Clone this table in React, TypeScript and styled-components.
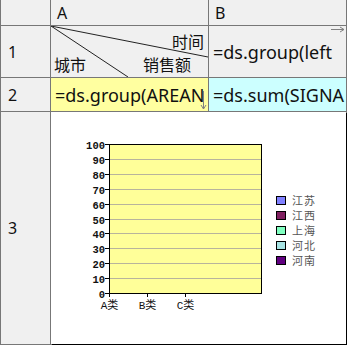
import React from "react";
import styled, { createGlobalStyle } from "styled-components";

const Global = createGlobalStyle`
  html, body { margin: 0; padding: 0; background: #ffffff; }
  body { font-family: "Noto Sans", "Noto Sans CJK SC", sans-serif; }
`;

const LINE = "#777777";

const Sheet = styled.div`
  display: grid;
  grid-template-columns: 49px 157px 137px;
  grid-template-rows: 25px 51px 33px 232px;
  gap: 1px;
  width: max-content;
  background: ${LINE};
  border-left: 1px solid ${LINE};
  border-right: 1px solid ${LINE};
  border-bottom: 1px solid ${LINE};
  font-family: "Noto Sans", "Noto Sans CJK SC", sans-serif;
  font-size: 16px;
  color: #111;
`;

const HeadCell = styled.div<{ $pad?: number }>`
  background: #f0f0f0;
  display: flex;
  align-items: center;
  padding-left: ${(p) => p.$pad ?? 6}px;
  line-height: 1;
`;

const Cell = styled.div<{ $bg: string }>`
  position: relative;
  background: ${(p) => p.$bg};
  display: flex;
  align-items: center;
  padding-left: 4px;
  overflow: hidden;
  white-space: nowrap;
  line-height: 1;
  font-size: 18px;
`;

const DiagCell = styled.div`
  position: relative;
  background: #f0f0f0;
  display: flex;
  flex-direction: column;
  justify-content: space-between;
  padding: 8px 4px 4px 3px;
  line-height: 1;
`;

const DiagLines = styled.svg`
  position: absolute;
  left: 0;
  top: 0;
  pointer-events: none;
`;

const DiagTop = styled.div`
  display: flex;
  justify-content: flex-end;
  position: relative;
`;

const DiagBottom = styled.div`
  display: flex;
  justify-content: space-between;
  padding-right: 13px;
  position: relative;
`;

const Marker = styled.svg<{ $right?: number; $top?: number }>`
  position: absolute;
  right: ${(p) => p.$right ?? 0}px;
  top: ${(p) => p.$top ?? 0}px;
`;

const ChartCell = styled.div`
  grid-column: 2 / span 2;
  background: #ffffff;
  box-shadow: 1px 1px 0 #000;
  display: flex;
`;

const ChartSvg = styled.svg`
  display: block;
  font-family: "Liberation Mono", "Noto Sans CJK SC", monospace;
`;

const legend = [
  { name: "江苏", color: "#8080ff" },
  { name: "江西", color: "#802060" },
  { name: "上海", color: "#80ffc0" },
  { name: "河北", color: "#a8e4e4" },
  { name: "河南", color: "#600080" },
];

function Chart() {
  const px = 58;
  const py = 32;
  const pw = 153;
  const ph = 149;
  const ticks = Array.from({ length: 11 }, (_, i) => i * 10);
  return (
    <ChartSvg width={295} height={232} viewBox="0 0 295 232">
      <rect x={px} y={py} width={pw} height={ph} fill="#ffff99" />
      {ticks.slice(1, 10).map((t) => {
        const y = Math.round(py + ph - (t / 100) * ph) + 0.5;
        return <line key={t} x1={px} x2={px + pw} y1={y} y2={y} stroke="#b8b49c" strokeWidth={1} />;
      })}
      <rect x={px + 0.5} y={py + 0.5} width={pw - 1} height={ph} fill="none" stroke="#000" strokeWidth={1} />
      {ticks.map((t) => {
        const y = Math.round(py + ph - (t / 100) * ph) + 0.5;
        return (
          <g key={t}>
            <line x1={px - 4} x2={px} y1={y} y2={y} stroke="#000" />
            <text x={px - 4} y={y + 4} fontSize={10.5} fontWeight={700} textAnchor="end" fill="#111">
              {t}
            </text>
          </g>
        );
      })}
      {["A类", "B类", "C类"].map((c, i) => {
        const x = px + i * 38 + 0.5;
        return (
          <g key={c}>
            <line x1={x} x2={x} y1={py + ph} y2={py + ph + 4} stroke="#000" />
            <text x={x} y={197} fontSize={11} textAnchor="middle" fill="#111">
              {c}
            </text>
          </g>
        );
      })}
      {legend.map((l, i) => (
        <g key={l.name}>
          <rect x={225.5} y={84.5 + i * 15} width={9} height={8} fill={l.color} stroke="#000" />
          <text x={241} y={93 + i * 15} fontSize={11} fill="#555" letterSpacing={1}>
            {l.name}
          </text>
        </g>
      ))}
    </ChartSvg>
  );
}

export default function App() {
  return (
    <>
      <Global />
      <Sheet>
        <HeadCell />
        <HeadCell>A</HeadCell>
        <HeadCell>B</HeadCell>

        <HeadCell $pad={7}>1</HeadCell>
        <DiagCell>
          <DiagLines width={157} height={51}>
            <line x1={0} y1={0} x2={157} y2={31} stroke="#222" strokeWidth={1} />
            <line x1={0} y1={0} x2={77} y2={51} stroke="#222" strokeWidth={1} />
          </DiagLines>
          <DiagTop>时间</DiagTop>
          <DiagBottom>
            <span>城市</span>
            <span>销售额</span>
          </DiagBottom>
        </DiagCell>
        <Cell $bg="#f0f0f0">
          =ds.group(left
          <Marker $right={1} $top={0} width={14} height={7} viewBox="0 0 14 7">
            <line x1={0} y1={3.5} x2={13} y2={3.5} stroke="#808080" />
            <path d="M9 1 L13 3.5 L9 6" fill="none" stroke="#808080" />
          </Marker>
        </Cell>

        <HeadCell $pad={7}>2</HeadCell>
        <Cell $bg="#ffffa0">
          =ds.group(AREAN
          <Marker $right={1} $top={13} width={7} height={19} viewBox="0 0 7 19">
            <line x1={3.5} y1={0} x2={3.5} y2={18} stroke="#808080" />
            <path d="M1 14 L3.5 18 L6 14" fill="none" stroke="#808080" />
          </Marker>
        </Cell>
        <Cell $bg="#ccffff">=ds.sum(SIGNA</Cell>

        <HeadCell $pad={7}>3</HeadCell>
        <ChartCell>
          <Chart />
        </ChartCell>
      </Sheet>
    </>
  );
}
